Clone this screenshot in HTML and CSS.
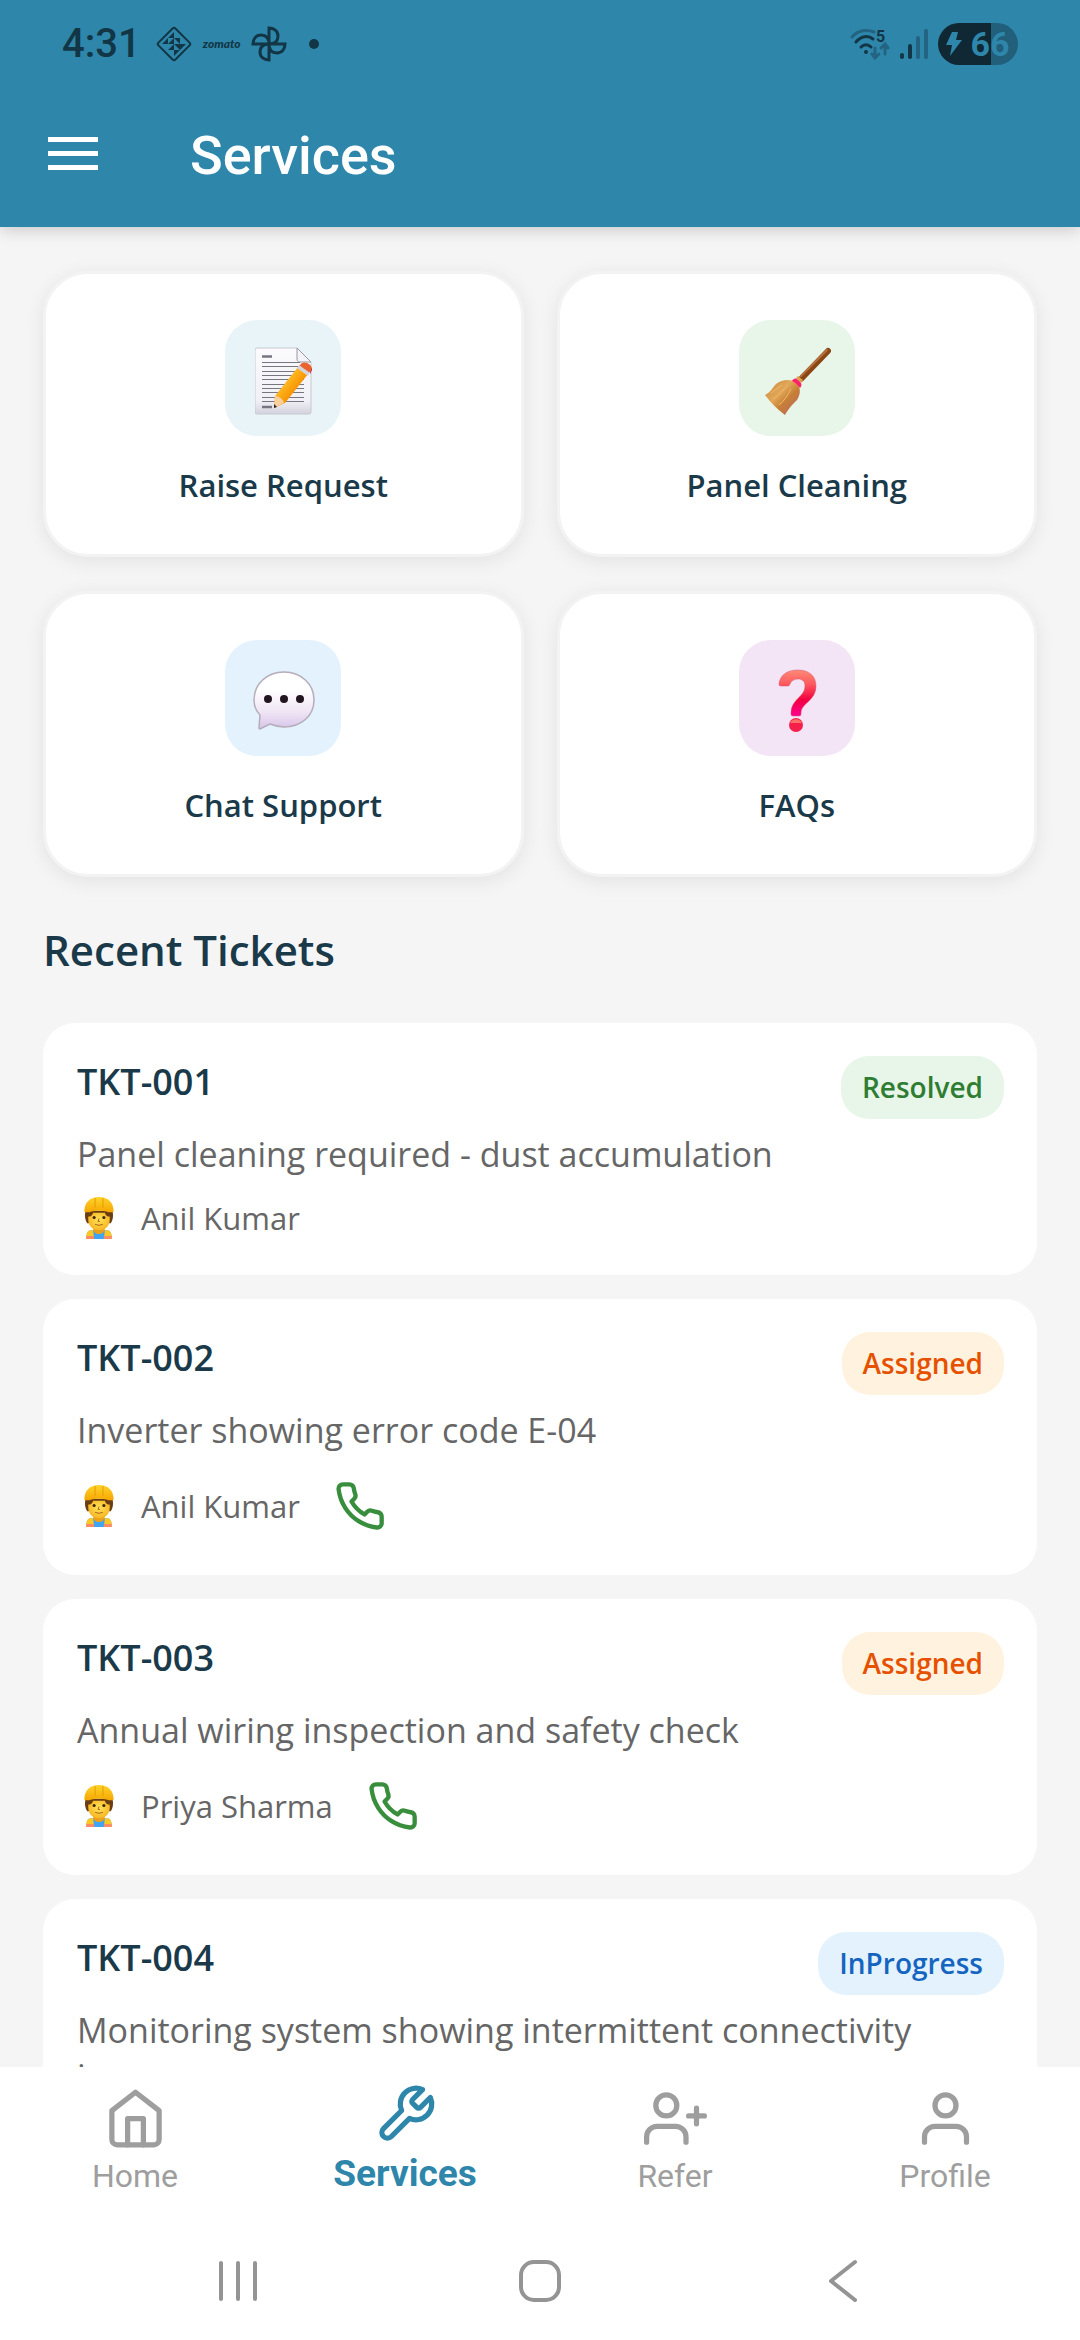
FILE: index.html
```html
<!DOCTYPE html>
<html lang="en">
<head>
  <meta charset="UTF-8">
  <meta name="viewport" content="width=device-width, initial-scale=1">
  <title>Services</title>
  <link rel="stylesheet" href="styles.css">
</head>
<body>

  <!-- shared drawings -->
  <svg class="defs" width="0" height="0" aria-hidden="true">
    <defs>
      <linearGradient id="hat" x1="0" y1="0" x2="0" y2="1">
        <stop offset="0" stop-color="#ffd42e"/>
        <stop offset="1" stop-color="#f5a700"/>
      </linearGradient>
      <radialGradient id="face" cx="0.5" cy="0.45" r="0.6">
        <stop offset="0" stop-color="#ffe25a"/>
        <stop offset="1" stop-color="#f7b21c"/>
      </radialGradient>
      <symbol id="worker" viewBox="0 0 30 43">
        <path d="M2 43c0-6 1-9 5-9h16c4 0 5 3 5 9z" fill="#3fa4f2"/>
        <path d="M2 43c0-6 1-9 5-9h2l1 9zM28 43c0-6-1-9-5-9h-2l-1 9z" fill="#ffc81f"/>
        <path d="M2 43v-3h8v3zM20 43v-3h8v3z" fill="#ff8a65"/>
        <path d="M9 32h12c0 8-12 8-12 0z" fill="#eda01a"/>
        <path d="M1 15h28c1 5 0 9-2 12H3C1 24 0 20 1 15z" fill="#6b3d12"/>
        <path d="M4 15h22v8c0 7-5 11-11 11S4 30 4 23z" fill="url(#face)"/>
        <path d="M3 20c4 0 5-1 6-4h12c1 3 2 4 6 4v-6H3z" fill="#6b3d12"/>
        <circle cx="10" cy="21" r="1.600" fill="#3d2508"/>
        <circle cx="20" cy="21" r="1.600" fill="#3d2508"/>
        <path d="M15 22l-1 3h2M11 28q4 2 8 0" fill="none" stroke="#a8641a"/>
        <path d="M0 15C0 5 6 0 15 0s15 5 15 15c-4 2-6-1-15-1S4 17 0 15z" fill="url(#hat)"/>
        <path d="M11 1v10M19 1v10" stroke="#e59a00" fill="none"/>
      </symbol>
      <symbol id="phone" viewBox="0 0 24 24">
        <path d="M22 16.92v3a2 2 0 0 1-2.18 2 19.79 19.79 0 0 1-8.63-3.07 19.5 19.5 0 0 1-6-6 19.79 19.79 0 0 1-3.07-8.67A2 2 0 0 1 4.11 2h3a2 2 0 0 1 2 1.72 12.84 12.84 0 0 0 .7 2.81 2 2 0 0 1-.45 2.11L8.09 9.91a16 16 0 0 0 6 6l1.27-1.27a2 2 0 0 1 2.11-.45 12.84 12.84 0 0 0 2.81.7A2 2 0 0 1 22 16.92z"/>
      </symbol>
    </defs>
  </svg>

  <header class="header">
    <div class="status-bar">
      <div class="status-left">
        <span class="clock">4:31</span>
        <svg width="38" height="38" viewBox="0 0 38 38" fill="#123645">
          <rect x="7" y="7" width="24" height="24" rx="2" transform="rotate(45 19 19)" fill="none" stroke="#123645" stroke-width="2"/>
          <path d="M19 7v6h-6zM13 13v6H7zM19 13h6v6zM13 19h6v-6zM19 19v6h-6zM25 19h6l-6 6zM19 19h6v6zM19 25h6l-6 6z"/>
        </svg>
        <span class="brand">zomato</span>
        <svg width="36" height="38" viewBox="0 0 36 38" fill="none" stroke="#123645" stroke-width="3">
          <path d="M18 19V3c5 0 9 3 9 8s-3 8-9 8zM18 19h16c0 5-3 9-8 9s-8-3-8-9zM18 19v16c-5 0-9-3-9-8s3-8 9-8zM18 19H2c0-5 3-9 8-9s8 3 8 9z"/>
        </svg>
        <span class="dot"></span>
      </div>
      <div class="status-right">
        <svg class="wifi" width="40" height="32" viewBox="0 0 40 32" fill="none" stroke-width="3" stroke-linecap="round">
          <path d="M2 9C8 2 17 1 24 4" stroke="#226481"/>
          <path d="M6 14c5-6 12-7 17-3M11 19c3-3 7-3 10 0" stroke="#123645"/>
          <circle cx="16" cy="24" r="2" fill="#123645" stroke="none"/>
          <path d="M25 20v9m-3-3l3 4 4-4M35 26v-9m-4 3l4-4 3 4" stroke="#226481"/>
          <text x="26" y="14" class="wifi-num">5</text>
        </svg>
        <svg width="28" height="32" viewBox="0 0 28 32" stroke-width="4" stroke-linecap="round">
          <path d="M2 27v2M10 18v11" stroke="#123645"/>
          <path d="M18 10v19M26 3v26" stroke="#226481"/>
        </svg>
        <div class="battery">
          <svg width="16" height="24" viewBox="0 0 16 24" fill="#2e86ab"><path d="M6 0h6l-2 8h6L4 24l2-11H0z"/></svg>
          <span>66</span>
        </div>
      </div>
    </div>
    <div class="app-bar">
      <button class="menu-btn" aria-label="Open menu">
        <svg width="50" height="40" viewBox="0 0 50 40" fill="#fff"><path d="M0 1h50v5H0zM0 15h50v5H0zM0 29h50v5H0z"/></svg>
      </button>
      <h1>Services</h1>
    </div>
  </header>

  <main class="content">
    <div class="actions">
      <button class="action-card">
        <span class="action-icon request">
          <svg width="58" height="68" viewBox="0 0 58 68">
            <defs>
              <linearGradient id="paper" x1="0" y1="0" x2="0" y2="1">
                <stop offset="0" stop-color="#fbfbfd"/>
                <stop offset="0.8" stop-color="#f1f0f6"/>
                <stop offset="1" stop-color="#d3d1dc"/>
              </linearGradient>
              <linearGradient id="pencil" x1="0" y1="0" x2="1" y2="1">
                <stop offset="0.3" stop-color="#ffc02a"/>
                <stop offset="0.6" stop-color="#f79400"/>
                <stop offset="1" stop-color="#cf5a2e"/>
              </linearGradient>
            </defs>
            <path d="M2 1h40l14 14v50a2 2 0 0 1-2 2H2a2 2 0 0 1-2-2V3a2 2 0 0 1 2-2z" fill="url(#paper)" stroke="#c9c8d2"/>
            <path d="M42 1l14 14H45c-2 0-3-1-3-3z" fill="#f4f4f8" stroke="#9a98a5"/>
            <path d="M7 15.500h38M7 19.500h42M7 24.500h42M7 28.500h42M7 32.500h42M7 37.500h42M7 41.500h42M7 45.500h42M7 50.500h42M7 54.500h42" stroke="#77757f"/>
            <path d="M7 9.500h10M7 60h10" stroke="#77757f" stroke-width="2.500"/>
            <path d="M19 61l1-12 23-29 10 7-23 29z" fill="url(#pencil)"/>
            <path d="M19 61l1-12c4 0 8 3 9 7z" fill="#f9cf9b"/>
            <path d="M19 61v-4l3 3z" fill="#33222b"/>
            <path d="M43 20l4-4c4-2 10 2 10 6l-4 5z" fill="#e9632f"/>
            <path d="M42 21l2-3 11 8-2 3z" fill="#d5d3dd"/>
            <path d="M55 25l2-4v2l-2 4z" fill="#c2183b"/>
          </svg>
        </span>
        Raise Request
      </button>
      <button class="action-card">
        <span class="action-icon cleaning">
          <svg width="66" height="68" viewBox="0 0 66 68">
            <defs>
              <linearGradient id="straw" x1="0" y1="0" x2="1" y2="1">
                <stop offset="0" stop-color="#c98a3e"/>
                <stop offset="0.4" stop-color="#e2a758"/>
                <stop offset="0.6" stop-color="#c67f36"/>
                <stop offset="1" stop-color="#b9646a"/>
              </linearGradient>
            </defs>
            <path d="M36 32L63 4" stroke="#8a4615" stroke-width="6" stroke-linecap="round"/>
            <path d="M36 29L62 3" stroke="#b8703a" stroke-width="2" stroke-linecap="round"/>
            <path d="M0 48c6-3 7-7 11-11 6-5 14-5 20-2 5 5 5 12 1 18-5 5-8 8-12 15C12 62 6 56 0 48z" fill="url(#straw)"/>
            <path d="M8 52c6-3 10-9 15-14M14 58c5-4 9-10 12-16M6 46c5-3 7-6 11-8" stroke="#eebb68" fill="none"/>
            <path d="M27 34c1-2 3-3 5-2l4 4c1 2 0 4-1 5-2-3-4-5-8-7z" fill="#ff1f6b"/>
            <path d="M31 31l2-2 5 4-2 3z" fill="#e0a04c"/>
          </svg>
        </span>
        Panel Cleaning
      </button>
      <button class="action-card">
        <span class="action-icon chat">
          <svg width="62" height="60" viewBox="0 0 62 60">
            <defs>
              <linearGradient id="bubble" x1="0" y1="0" x2="0" y2="1">
                <stop offset="0.3" stop-color="#fff"/>
                <stop offset="0.7" stop-color="#efe5f4"/>
                <stop offset="1" stop-color="#d6c4ea"/>
              </linearGradient>
            </defs>
            <path d="M31 1c17 0 30 12 30 28S48 56 31 56c-5 0-9-1-14-3L7 58c-1 0-1 0-1-1l1-13C3 40 1 35 1 29 1 13 14 1 31 1z" fill="url(#bubble)" stroke="#b5adb9" stroke-width="1.500"/>
            <g fill="#23151f"><circle cx="15" cy="28" r="4"/><circle cx="31" cy="28" r="4"/><circle cx="47" cy="28" r="4"/></g>
          </svg>
        </span>
        Chat Support
      </button>
      <button class="action-card">
        <span class="action-icon faq">
          <svg width="40" height="64" viewBox="0 0 40 64">
            <defs>
              <linearGradient id="question" x1="0" y1="0" x2="0" y2="1">
                <stop offset="0" stop-color="#ff8a78"/>
                <stop offset="0.3" stop-color="#ff5a5f"/>
                <stop offset="0.65" stop-color="#f2003f"/>
                <stop offset="1" stop-color="#ff0090"/>
              </linearGradient>
            </defs>
            <path d="M3 17c-2 0-2-1-2-2C2 6 9 1 20 1c11 0 18 6 18 16 0 15-15 17-15 27 0 2 0 3-2 3h-6c-2 0-2-1-2-3 0-14 14-16 14-27 0-5-3-7-7-7s-7 2-8 5c-1 2-1 2-3 2z" fill="url(#question)" stroke="#d8556a" stroke-width="0.500"/>
            <circle cx="18" cy="56" r="7" fill="#f51f4b"/>
            <path d="M12 54c2-5 10-5 12 0z" fill="#ff6f68"/>
          </svg>
        </span>
        FAQs
      </button>
    </div>

    <h2>Recent Tickets</h2>

    <div class="tickets">
      <article class="ticket">
        <div class="ticket-head">
          <h3>TKT-001</h3>
          <span class="badge resolved">Resolved</span>
        </div>
        <p>Panel cleaning required - dust accumulation</p>
        <div class="ticket-meta">
          <svg class="worker"><use href="#worker"/></svg>
          <span>Anil Kumar</span>
        </div>
      </article>

      <article class="ticket">
        <div class="ticket-head">
          <h3>TKT-002</h3>
          <span class="badge assigned">Assigned</span>
        </div>
        <p>Inverter showing error code E-04</p>
        <div class="ticket-meta">
          <svg class="worker"><use href="#worker"/></svg>
          <span>Anil Kumar</span>
          <button class="call-btn" aria-label="Call Anil Kumar"><svg><use href="#phone"/></svg></button>
        </div>
      </article>

      <article class="ticket">
        <div class="ticket-head">
          <h3>TKT-003</h3>
          <span class="badge assigned">Assigned</span>
        </div>
        <p>Annual wiring inspection and safety check</p>
        <div class="ticket-meta">
          <svg class="worker"><use href="#worker"/></svg>
          <span>Priya Sharma</span>
          <button class="call-btn" aria-label="Call Priya Sharma"><svg><use href="#phone"/></svg></button>
        </div>
      </article>

      <article class="ticket">
        <div class="ticket-head">
          <h3>TKT-004</h3>
          <span class="badge progress">InProgress</span>
        </div>
        <p>Monitoring system showing intermittent connectivity issues</p>
      </article>
    </div>
  </main>

  <nav class="tab-bar">
    <a class="tab" href="#home">
      <svg viewBox="0 0 24 24"><path d="M3 9l9-7 9 7v11a2 2 0 0 1-2 2H5a2 2 0 0 1-2-2z"/><path d="M9 22V12h6v10"/></svg>
      Home
    </a>
    <a class="tab active" href="#services">
      <svg viewBox="0 0 24 24"><path d="M14.700 6.300a1 1 0 0 0 0 1.400l1.600 1.600a1 1 0 0 0 1.400 0l3.770-3.770a6 6 0 0 1-7.940 7.940l-6.910 6.910a2.120 2.120 0 0 1-3-3l6.910-6.910a6 6 0 0 1 7.940-7.940l-3.760 3.760z"/></svg>
      Services
    </a>
    <a class="tab" href="#refer">
      <svg viewBox="0 0 24 24"><path d="M16 21v-2a4 4 0 0 0-4-4H5a4 4 0 0 0-4 4v2"/><circle cx="8.500" cy="7" r="4"/><path d="M20 8v6M23 11h-6"/></svg>
      Refer
    </a>
    <a class="tab" href="#profile">
      <svg viewBox="0 0 24 24"><path d="M20 21v-2a4 4 0 0 0-4-4H8a4 4 0 0 0-4 4v2"/><circle cx="12" cy="7" r="4"/></svg>
      Profile
    </a>
  </nav>

  <div class="system-bar">
    <button aria-label="Recent apps"><svg width="44" height="44" viewBox="0 0 44 44"><path d="M5 4v36M22 4v36M39 4v36"/></svg></button>
    <button aria-label="Home screen"><svg width="44" height="44" viewBox="0 0 44 44"><rect x="3" y="3" width="38" height="38" rx="13"/></svg></button>
    <button aria-label="Back"><svg width="44" height="44" viewBox="0 0 44 44"><path d="M35 3L11 22l24 19"/></svg></button>
  </div>

</body>
</html>
```

FILE: styles.css
```css
* {
  box-sizing: border-box;
}
body {
  font-family: "Open Sans", sans-serif;
  background: #f5f5f5;
  margin: 0;
  height: 100vh;
  display: flex;
  flex-direction: column;
  color: #1a3a4a;
}
h1, h2, h3, p {
  margin: 0;
}
button {
  font: inherit;
  color: inherit;
  border: none;
  background: none;
  padding: 0;
  cursor: pointer;
}
svg {
  display: block;
  flex: none;
}
.defs {
  position: absolute;
}

/* header */
.header {
  background: #2e86ab;
  box-shadow: 0 2px 16px rgba(0,0,0,0.2);
  position: relative;
  z-index: 1;
}
.status-bar {
  display: flex;
  justify-content: space-between;
  height: 88px;
  padding: 0 62px;
  align-items: center;
  color: #123645;
}
.status-left, .status-right {
  display: flex;
  align-items: center;
}
.status-left {
  gap: 10px;
}
.clock {
  font: 500 40px/44px Roboto, sans-serif;
  margin-right: 4px;
}
.brand {
  font: italic 900 12px/16px Lato, sans-serif;
}
.dot {
  width: 10px;
  height: 10px;
  border-radius: 50%;
  background: #123645;
  margin-left: 12px;
}
.status-right {
  gap: 10px;
}
.wifi {
  overflow: visible;
}
.wifi-num {
  font: 700 16px Roboto, sans-serif;
  fill: #123645;
}
.battery {
  display: flex;
  align-items: center;
  justify-content: center;
  gap: 8px;
  width: 80px;
  height: 42px;
  border-radius: 21px;
  background: linear-gradient(to right, #0f2833 66%, #215f7a 66%);
  color: #2e86ab;
  font: 700 34px/42px Roboto, sans-serif;
}
.app-bar {
  display: flex;
  align-items: center;
  gap: 92px;
  height: 139px;
  padding: 0 48px 4px;
}
.app-bar h1 {
  font: 500 54px/64px Roboto, sans-serif;
  color: #fff;
}

/* services */
.content {
  flex: 1;
  min-height: 0;
  overflow: hidden;
  padding: 44px 43px 0;
}
.actions {
  display: grid;
  grid-template-columns: 1fr 1fr;
  gap: 34px 33px;
}
.action-card {
  display: flex;
  flex-direction: column;
  align-items: center;
  gap: 26px;
  height: 286px;
  padding: 46px 20px;
  background: #fff;
  border: 3px solid #f3f3f3;
  border-radius: 45px;
  box-shadow: 0 4px 20px rgba(0,0,0,0.08);
  font-size: 31px;
  font-weight: 600;
  line-height: 46px;
}
.action-icon {
  display: flex;
  align-items: center;
  justify-content: center;
  width: 116px;
  height: 116px;
  padding: 6px 0 0 2px;
  border-radius: 32px;
}
.request {
  background: #e8f4f8;
}
.cleaning {
  background: #e8f5e9;
}
.chat {
  background: #e3f2fd;
}
.faq {
  background: #f3e5f5;
}

/* tickets */
h2 {
  font-size: 42px;
  font-weight: 600;
  line-height: 56px;
  margin: 45px 0;
}
.tickets {
  display: flex;
  flex-direction: column;
  gap: 24px;
}
.ticket {
  background: #fff;
  border-radius: 32px;
  padding: 33px 33px 33px 34px;
}
.ticket-head {
  display: flex;
  justify-content: space-between;
  align-items: flex-start;
  margin-bottom: 12px;
}
.ticket h3 {
  font-size: 36px;
  font-weight: 600;
  line-height: 52px;
}
.ticket p {
  font-size: 34px;
  line-height: 46px;
  color: #666;
}
.badge {
  padding: 10px 21px;
  border-radius: 28px;
  font-size: 28px;
  font-weight: 600;
  line-height: 43px;
}
.resolved {
  background: #e8f5e9;
  color: #2e7d32;
}
.assigned {
  background: #fff3e0;
  color: #e65100;
}
.progress {
  background: #e3f2fd;
  color: #1565c0;
}
.ticket-meta {
  display: flex;
  align-items: center;
  min-height: 48px;
  margin-top: 17px;
  font-size: 31px;
  line-height: 44px;
  color: #666;
}
.worker {
  width: 30px;
  height: 42px;
  margin: 0 27px 0 7px;
}
.call-btn {
  display: flex;
  align-items: center;
  justify-content: center;
  width: 72px;
  height: 72px;
  margin-left: 24px;
}
.call-btn svg {
  width: 52px;
  height: 52px;
  fill: none;
  stroke: #388e3c;
  stroke-width: 2;
  stroke-linecap: round;
  stroke-linejoin: round;
}

/* bottom tabs */
.tab-bar {
  display: grid;
  grid-template-columns: repeat(4, 1fr);
  height: 154px;
  background: #fff;
}
.tab {
  display: flex;
  flex-direction: column;
  align-items: center;
  justify-content: flex-end;
  gap: 6px;
  padding-bottom: 25px;
  font: 400 32px/40px Roboto, sans-serif;
  color: #9e9e9e;
  text-decoration: none;
}
.tab svg {
  width: 63px;
  height: 63px;
  fill: none;
  stroke: currentColor;
  stroke-width: 2;
  stroke-linecap: round;
  stroke-linejoin: round;
}
.tab.active {
  color: #2e86ab;
  font-size: 37px;
  font-weight: 700;
  line-height: 44px;
}
.system-bar {
  display: grid;
  grid-template-columns: repeat(3, 1fr);
  align-items: center;
  justify-items: center;
  height: 119px;
  padding: 0 87px;
  background: #fff;
}
.system-bar svg {
  fill: none;
  stroke: #949494;
  stroke-width: 4;
  stroke-linecap: round;
  stroke-linejoin: round;
}
```
